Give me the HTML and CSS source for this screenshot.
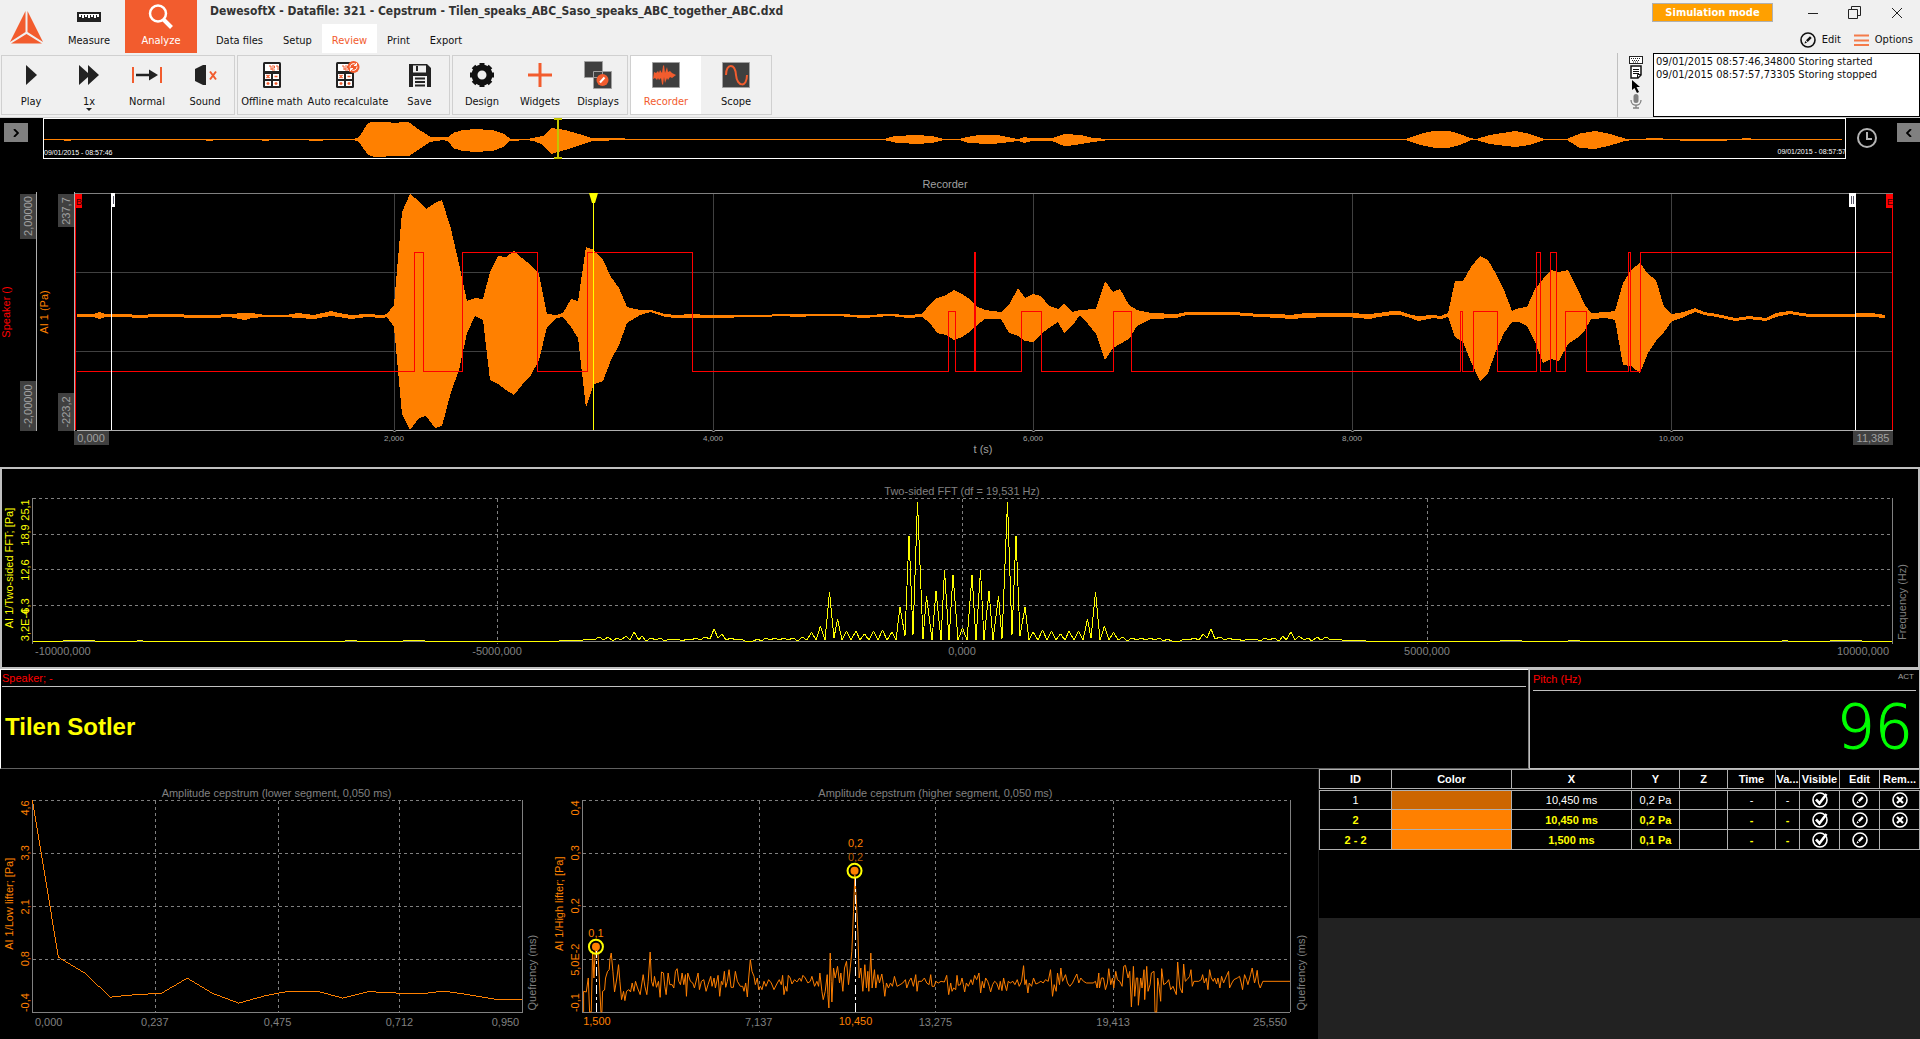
FILE: index.html
```html
<!DOCTYPE html>
<html lang="en">
<head>
<meta charset="utf-8">
<meta name="viewport" content="width=device-width, initial-scale=1">
<title>DewesoftX - Cepstrum</title>
<link rel="stylesheet" href="styles.css">
</head>
<body>
<svg class="defs" aria-hidden="true">
  <symbol id="i-calc" viewBox="0 0 18 26">
    <rect width="18" height="26" rx="1.5" fill="#222"/><rect x="2" y="2" width="14" height="7" fill="#fff"/>
    <path d="M6 4h2v4M9 4h2.500v2H9v2h3M13 4h2v4" stroke="#f25c2e" fill="none"/>
    <path d="M2 12h6v5H2zM10 12h6v5h-6zM2 19h6v5H2zM10 19h6v5h-6z" fill="#fff"/>
    <path d="M3.500 13l3 3m0-3l-3 3M11.500 14.500h3M3.500 21.500h3M5 20v3M11.500 21.500h3M13 20v3" stroke="#f25c2e" stroke-width="1.300"/>
  </symbol>
  <symbol id="i-edit" viewBox="0 0 16 16">
    <circle cx="8" cy="8" r="7" fill="none" stroke="currentColor" stroke-width="1.600"/>
    <path d="M4.500 11.500l.8-2.500 1.700 1.700zM6 8.300l4-4 1.700 1.700-4 4z" fill="currentColor"/>
  </symbol>
  <symbol id="i-check" viewBox="0 0 16 16">
    <circle cx="8" cy="8" r="7" fill="none" stroke="currentColor" stroke-width="1.600"/>
    <path d="M4 7.500l3.500 3.800L14.500 2" fill="none" stroke="currentColor" stroke-width="2.600"/>
  </symbol>
  <symbol id="i-remove" viewBox="0 0 16 16">
    <circle cx="8" cy="8" r="7" fill="none" stroke="currentColor" stroke-width="1.600"/>
    <path d="M5 5l6 6m0-6l-6 6" stroke="currentColor" stroke-width="2.200"/>
  </symbol>
</svg>

<header class="header">
  <div class="top">
    <svg class="logo" viewBox="0 0 36 34" aria-label="Dewesoft" role="img">
      <path d="M16.500 1L1 32 16.500 22zM18.500 1L34 32 18.500 22zM2 33.500L17.500 24 33 33.500z" fill="#f25c2e"/>
    </svg>
    <button class="mode">
      <svg width="24" height="10" viewBox="0 0 24 10"><rect width="24" height="10" fill="#222"/><path d="M2 2h20v3h-2v-2h-1v3h-2V3h-1v2h-2V3h-1v3h-2V3h-1v2H8V3H7v3H5V3H4v2H2z" fill="#fff"/></svg>
      <span>Measure</span>
    </button>
    <button class="mode active">
      <svg width="26" height="26" viewBox="0 0 26 26" fill="none" stroke="#fff"><circle cx="10" cy="9.500" r="8" stroke-width="2.500"/><path d="M15.500 15.500l8 8" stroke-width="4"/></svg>
      <span>Analyze</span>
    </button>
    <div class="heading">
      <h1>DewesoftX - Datafile: 321 - Cepstrum - Tilen_speaks_ABC_Saso_speaks_ABC_together_ABC.dxd</h1>
      <nav class="tabs">
        <button>Data files</button><button>Setup</button><button class="active">Review</button><button>Print</button><button>Export</button>
      </nav>
    </div>
    <div class="window">
      <div class="windowbar">
        <span class="badge">Simulation mode</span>
        <button aria-label="Minimize"><svg width="14" height="14" viewBox="0 0 14 14"><path d="M2 7.500h10" stroke="#222"/></svg></button>
        <button aria-label="Restore"><svg width="14" height="14" viewBox="0 0 14 14" fill="none" stroke="#222"><path d="M.5 3.500h9v9h-9zM3.500 3.500v-3h9v9h-3"/></svg></button>
        <button aria-label="Close"><svg width="14" height="14" viewBox="0 0 14 14"><path d="M2 2l10 10M12 2L2 12" stroke="#222"/></svg></button>
      </div>
      <div class="links">
        <button><svg width="16" height="16"><use href="#i-edit"/></svg>Edit</button>
        <button><svg width="15" height="12" viewBox="0 0 15 12"><path d="M0 1.500h15M0 6.500h15M0 11h15" stroke="#f47b4a" stroke-width="2"/></svg>Options</button>
      </div>
    </div>
  </div>

  <div class="ribbon">
    <div class="group narrow">
      <button><svg width="28" height="28" viewBox="0 0 28 28"><path d="M9 4l11 10L9 24z" fill="#222"/></svg>Play</button>
      <button class="drop"><svg width="28" height="28" viewBox="0 0 28 28"><path d="M4 4l9 8V4l11 10-11 10v-8L4 24z" fill="#222"/></svg>1x</button>
      <button><svg width="32" height="28" viewBox="0 0 32 28"><path d="M2 6v16M30 6v16" stroke="#f25c2e" stroke-width="2"/><path d="M5 14h16" stroke="#222" stroke-width="2.500"/><path d="M18 8.500L27 14l-9 5.500z" fill="#222"/></svg>Normal</button>
      <button><svg width="28" height="28" viewBox="0 0 28 28"><path d="M4 8l8-4h3v20h-3l-8-4z" fill="#222"/><path d="M19 10.500l6 8m0-8l-6 8" stroke="#f25c2e" stroke-width="2"/></svg>Sound</button>
    </div>
    <div class="group math">
      <button><svg width="18" height="28" viewBox="0 0 18 26"><use href="#i-calc"/></svg>Offline math</button>
      <button><svg width="24" height="28" viewBox="0 0 24 28"><use href="#i-calc" width="18" height="26" y="1"/><circle cx="17.500" cy="6" r="6" fill="#f25c2e"/><path d="M14 6.500a3.500 3.500 0 016-2.800M21 5.500a3.500 3.500 0 01-6 2.800M20.500 2v2.500H18M14.500 10V7.500H17" fill="none" stroke="#fff"/></svg>Auto recalculate</button>
      <button><svg width="24" height="28" viewBox="0 0 24 28"><path d="M1 3h18l4 4v19H1zM5 4.500v7h13v-7zM5 15v11h14V15z" fill="#222" fill-rule="evenodd"/><path d="M9 5v5M7 17.500h10M7 21h10M7 24.500h10" stroke="#222" stroke-width="2"/></svg>Save</button>
    </div>
    <div class="group narrow">
      <button><svg width="28" height="28" viewBox="0 0 28 28"><circle cx="14" cy="14" r="7.500" fill="none" stroke="#111" stroke-width="6"/><path d="M14 2v4M14 22v4M2 14h4M22 14h4M5.500 5.500l3 3M19.500 19.500l3 3M22.500 5.500l-3 3M8.500 19.500l-3 3" stroke="#111" stroke-width="5"/></svg>Design</button>
      <button><svg width="26" height="28" viewBox="0 0 26 28"><path d="M13 2v24M1 14h24" stroke="#f25c2e" stroke-width="3"/></svg>Widgets</button>
      <button><svg width="30" height="28" viewBox="0 0 30 28"><path d="M1.500.5h18v16h-18zM10.500 10.500h18v17h-18z" fill="#3f3f3f" stroke="#a0a0a0"/><circle cx="19.500" cy="19" r="6" fill="#f25c2e"/><path d="M17 21.500l4.500-5" stroke="#fff" stroke-width="2"/></svg>Displays</button>
    </div>
    <div class="group wide">
      <button class="active"><svg width="28" height="28" viewBox="0 0 28 28"><path d="M.5 1.500h27v25H.5z" fill="#3f3f3f" stroke="#a0a0a0"/><path d="M2 11l2 1 2-2 1 2 1-3 2 3 1-7 1-1 1 8 2-6 1 5 2-1 2 2 4 2-4 3-2-1-2 3-1-2-2 5-1-6-1 8-1-1-1-6-2 2-1-2-1 2-2-2-2 1z" fill="#f25c2e"/></svg>Recorder</button>
      <button><svg width="28" height="28" viewBox="0 0 28 28"><path d="M.5 1.500h27v25H.5z" fill="#3f3f3f" stroke="#a0a0a0"/><path d="M4 14C4 2 13 2 14 14s11 13 11 0" fill="none" stroke="#f25c2e" stroke-width="2"/></svg>Scope</button>
    </div>
    <div class="events">
      <div class="eventtools">
        <svg width="14" height="8" viewBox="0 0 14 8"><rect x=".5" y=".5" width="13" height="7" fill="#fff" stroke="#222"/><path d="M2 2.500h10M3 4.500h8M4 6h6" stroke="#222" stroke-dasharray="1 1"/></svg>
        <svg width="12" height="14" viewBox="0 0 12 14"><path d="M1 1h10v9l-3 3H1z" fill="#fff" stroke="#111" stroke-width="1.500"/><path d="M3 4.500h6M3 6.500h6M3 8.500h6M11 9.500H7.500V13" stroke="#111" fill="none"/></svg>
        <svg width="12" height="13" viewBox="0 0 12 13"><path d="M2 0l8 7H6.500L9 12l-2 1-2.500-5L2 10z" fill="#000"/></svg>
        <svg width="12" height="15" viewBox="0 0 12 15"><rect x="3.500" y="0" width="5" height="9" rx="2.500" fill="#808080"/><path d="M1 6c0 7 10 7 10 0M6 11v3M3 14h6" fill="none" stroke="#808080" stroke-width="1.300"/></svg>
      </div>
      <textarea class="log" readonly aria-label="Event log">09/01/2015 08:57:46,34800 Storing started
09/01/2015 08:57:57,73305 Storing stopped</textarea>
    </div>
  </div>
</header>

<main>
  <section class="overview" aria-label="Overview">
    <button class="side" aria-label="Expand left panel"><svg width="6" height="8" viewBox="0 0 6 8"><path d="M1 0l4 4-4 4" fill="none" stroke="#000" stroke-width="1.800"/></svg></button>
    <svg class="strip" viewBox="43 118 1803 41">
      <rect class="crisp" x="43.500" y="118.500" width="1802" height="40" fill="#000" stroke="#fff"/>
      <path class="crisp" fill="#ff8000" d="M44 139H354L359 137 368 123 373 121.500H386L394 123 408 121.500 418 129 430 136.500H443L448 137 454 132.500 463 130 477 129 494 130.500 504 134 510 138.500 528 139 535 137.500 543 136 551 128 565 130 581 134.500 592 138 625 138.500H626V139H884L895 136 916 135 932 136 942 138.500 959 139 967 137 979 135H997L1010 137.500 1018 139 1024 137 1032 138.500 1052 138 1065 134 1081 135 1093 138 1109 139H1406L1420 134 1435 130.500H1448L1460 134 1470 138 1476 139 1490 135 1515 131 1530 134 1543 138.500 1567 139 1575 135.500 1580 133.500 1595 131 1610 134 1625 138.500 1640 139 1652 138H1663V139H1742V138H1751V139H1842V140H1727V141H1680V140H1632L1625 141 1610 145.500 1595 149 1580 148 1575 145 1567 140 1543 140.500 1530 145 1515 147 1490 144 1476 140 1470 140.500 1460 145 1448 148H1435L1420 145 1406 140H1109L1093 142 1081 144 1065 146.500 1052 141H1032L1024 143 1018 141 1010 142 997 143.500H979L967 142.500 959 140 942 140.500 932 143 916 144 895 142.500 884 140H626L592 141 581 145 565 150 551 154 543 145 535 141.500 528 140 510 141 504 146.500 494 150.500 477 152 463 151 454 148.500 448 141.500 443 140 430 142 418 150 408 156.500 394 155.500 386 156.500H373L368 155 359 142 354 140H323V141H309V140H269V141H262V140H213V141H206V140H71V141H64V140H44z"/>
      <path class="crisp" d="M558 119v39" stroke="#c4c400" stroke-width="2"/><path class="crisp" d="M554 119h8M554 158h8" stroke="#c4c400" stroke-width="2"/>
      <text class="tiny lit" x="44" y="155">09/01/2015 - 08:57:46</text>
      <text class="tiny lit" x="1846" y="154" text-anchor="end">09/01/2015 - 08:57:57</text>
    </svg>
    <svg class="clock" width="20" height="20" viewBox="0 0 20 20" fill="none" stroke="#b4b4b4"><circle cx="10" cy="10" r="9" stroke-width="2"/><path d="M10 4v7h5" stroke-width="2"/></svg>
    <button class="side last" aria-label="Expand right panel"><svg width="6" height="8" viewBox="0 0 6 8"><path d="M5 0L1 4l4 4" fill="none" stroke="#000" stroke-width="1.800"/></svg></button>
  </section>

  <section aria-label="Recorder">
    <svg class="chart" viewBox="0 159 1920 308">
      <text class="light" x="945" y="188" text-anchor="middle">Recorder</text>
      <g class="crisp" fill="none">
        <path stroke="#404040" d="M394.500 194V430M713.500 194V430M1033.500 194V430M1352.500 194V430M1671.500 194V430M76 272.500H1893M76 351.500H1893"/>
        <path stroke="#808080" d="M75 193.500H1893"/>
        <path stroke="#b0b0b0" d="M36.500 192V431M74.500 192V431M77 430.500H1893"/>
        <path stroke="#f00" d="M75.500 194V430M1892.500 194V430"/>
      </g>
      <g fill="#000" stroke="#b0b0b0"><path d="M392.500 430l2 2 2-2M711.500 430l2 2 2-2M1031.500 430l2 2 2-2M1350.500 430l2 2 2-2M1669.500 430l2 2 2-2"/></g>
      <path class="crisp" fill="#ff8000" d="M77 314H94L99 312 105 314H122L141 315 155 314 212 315 229 314 245 313 251 313 265 315H286L298 313 314 315 331 311 339 313 351 315 367 314 382 315 387 314 394 305 402 212 410 194 419 201 426 209 435 203 442 200 451 229 459 264 467 301 475 298 483 299 490 272 498 256 506 257 514 251 522 258 531 265 539 274 547 314 556 315 563 313 571 299 578 301 586 247 594 250 603 260 611 277 619 288 627 307 640 310H651L665 314 676 315 692 314 707 315H761L783 314H837L863 315 890 314 908 315 922 314 930 304 937 298 946 295 954 290 962 294 968 298 976 306 985 310 1001 312 1009 305 1018 288 1025 298 1033 294 1041 296 1049 306 1058 309 1064 304 1072 312 1080 310 1096 309 1105 281 1113 292 1120 289 1129 305 1137 310 1151 313 1176 314 1187 312H1234L1259 314 1280 314 1290 315 1306 313H1347L1370 314 1378 313 1392 311H1400L1411 315 1418 316 1433 315 1441 316 1448 313 1455 281 1463 281 1471 267 1480 256 1488 260 1496 274 1504 290 1512 311 1519 308 1527 307 1535 289 1543 279 1551 270 1559 272 1568 270 1577 288 1585 305 1591 313 1606 312 1615 311 1623 283 1631 270 1640 263 1648 274 1656 280 1664 307 1672 314 1684 312 1695 308 1704 312 1717 314 1735 318 1749 316 1766 318 1776 313 1790 311 1809 314H1839L1872 313 1885 315V318L1872 317H1809L1790 314 1776 317 1766 321 1749 319 1735 321 1717 317 1704 315 1695 312 1684 317 1672 321 1664 332 1656 341 1648 353 1640 373 1631 366 1623 365 1615 320 1606 318 1591 319 1585 330 1577 338 1568 344 1559 361 1551 359 1543 363 1535 342 1527 326 1519 322H1512L1504 333 1496 351 1488 373 1480 381 1471 362 1463 342 1455 337 1448 317 1441 319 1433 318 1418 321 1411 318 1400 315H1392L1378 317 1370 319 1347 317H1325L1306 318 1290 319 1280 318 1259 317 1234 315H1187L1176 318 1151 319 1137 326 1129 339 1120 344 1113 348 1105 360 1096 334 1088 324 1080 315 1072 326 1064 333 1058 322 1049 328 1041 334 1033 342 1025 341 1018 336 1009 333 1001 319H985L976 326 968 333 962 337 954 340 946 335 937 333 930 323 922 317 908 318 890 316 863 318 837 316H814L797 317 783 316 761 317 707 318H676L665 317 651 312 640 315 627 323 619 345 611 360 603 381 594 384 586 408 578 338 571 327 563 317 556 318 547 327 539 360 531 375 522 385 514 395 506 390 498 384 490 380 483 320 475 316 467 333 459 370 451 392 442 426 435 428 426 416 419 418 410 430 402 414 394 327 387 317 382 318 367 317 351 319 339 317 331 316 314 319 298 318 286 317H265L251 318 245 320 229 317 212 318 155 317 141 318 122 317H105L99 319 94 317H77z"/>
      <path class="crisp" fill="none" stroke="#f00" d="M77 371.500H414.500V252.500H423.500V371.500H462.500V252.500H537.500V371.500H587.500V252.500H692.500V371.500H948.500V311.500H955.500V371.500H974.500V252.500H975.500V371.500H1021.500V311.500H1041.500V371.500H1113.500V311.500H1131.500V371.500H1460.500V311.500H1462.500V371.500H1473.500V311.500H1497.500V371.500H1536.500V252.500H1540.500V371.500H1550.500V252.500H1556.500V371.500H1565.500V311.500H1586.500V371.500H1628.500V252.500H1630.500V371.500H1640.500V252.500H1891"/>
      <path class="crisp" d="M111.500 193V430M1855.500 193V430" stroke="#fff"/>
      <path class="crisp" d="M111 193h4v14h-4zM1849 193h7v14h-7z" fill="#fff"/>
      <path class="crisp" d="M113.500 196v8M1851.500 196v8M1853.500 196v8" stroke="#556"/>
      <path class="crisp" d="M75 194h7v14h-7zM1886 194h7v14h-7z" fill="#f00"/>
      <text class="flag" x="76" y="205">B</text><text class="flag" x="1887" y="205">E</text>
      <path class="crisp" d="M593.500 194V430" stroke="#ff0"/><path d="M589 193h9l-3 10h-3z" fill="#ff0"/>
      <path class="crisp" fill="#404040" d="M20 194h16v45H20zM20 381h16v50H20zM58 194h16v33H58zM58 393h16v38H58zM74 431h35v14H74zM1853 431h40v14h-40z"/>
      <g class="light" text-anchor="middle">
        <text transform="translate(32 216) rotate(-90)">2,00000</text>
        <text transform="translate(32 406) rotate(-90)">-2,00000</text>
        <text transform="translate(70 211) rotate(-90)">237,7</text>
        <text transform="translate(70 412) rotate(-90)">-223,2</text>
        <text x="91" y="442">0,000</text><text x="1873" y="442">11,385</text>
        <text x="983" y="453">t (s)</text>
      </g>
      <g class="ticks" text-anchor="middle">
        <text x="394" y="441">2,000</text><text x="713" y="441">4,000</text><text x="1033" y="441">6,000</text><text x="1352" y="441">8,000</text><text x="1671" y="441">10,000</text>
      </g>
      <text class="red" text-anchor="middle" transform="translate(10 312) rotate(-90)">Speaker ()</text>
      <text class="orange" text-anchor="middle" transform="translate(48 312) rotate(-90)">AI 1 (Pa)</text>
    </svg>
  </section>

  <section class="fft" aria-label="Two-sided FFT">
    <svg class="chart" viewBox="2 469 1916 198">
      <g class="crisp" fill="none" stroke="#808080">
        <path stroke-dasharray="3 3" d="M33 498.500H1892M33 534.500H1892M33 569.500H1892M33 605.500H1892M497.500 499V644M962.500 499V644M1427.500 499V644"/>
        <path d="M32.500 498V644M1892.500 498V644M32 641.500H1892"/>
      </g>
      <text class="gray" x="962" y="495" text-anchor="middle">Two-sided FFT (df = 19,531 Hz)</text>
      <g id="half" class="crisp" fill="none" stroke="#ff0" stroke-linejoin="bevel">
        <path d="M962.500 628L967 640 972 575 976 640 980.500 570 984 640 989 591 993 640 998.500 596 1002 639 1007.500 502 1012 635 1016 536 1020 636 1025 607 1029 640 1033 632 1038 640 1042.500 630 1047 640 1051.500 631 1056 640 1060.500 634 1065 640 1069 631 1074 640 1078.500 631 1083 640 1087.500 619 1091 638 1095.500 592 1100 640 1104.500 626 1109 640 1113.500 632 1118 640 1123 637 1127 641 1132 638 1137 640 1141 638 1146 640 1150 638 1155 640 1159 638 1164 641 1167 639 1172 641H1180L1184 639 1189 640 1194 638 1199 640 1203 634 1207 638 1211 629 1215 639 1220 637 1225 640 1229 638 1234 640 1238 639 1243 641 1247 639 1252 640 1256 639 1260 641 1265 638 1269 640 1274 638 1279 641 1283 636 1286 640 1291 632 1295 640 1299 636 1304 640 1308 638 1312 641 1317 637 1321 640 1326 637 1331 640 1334 639 1346 640.500H1352L1358 640H1362L1366 641H1500L1504 640 1510 641 1514 640H1518L1522 641H1568L1572 640H1576L1580 641H1782L1785 640 1788 641H1830L1836 640 1842 641 1850 640H1856L1862 641H1892"/>
      </g>
      <use href="#half" transform="translate(1925 0) scale(-1 1)"/>
      <g class="gray">
        <text x="35" y="655">-10000,000</text><text x="497" y="655" text-anchor="middle">-5000,000</text><text x="962" y="655" text-anchor="middle">0,000</text><text x="1427" y="655" text-anchor="middle">5000,000</text><text x="1889" y="655" text-anchor="end">10000,000</text>
        <text text-anchor="middle" transform="translate(1906 602) rotate(-90)">Frequency (Hz)</text>
      </g>
      <g class="yellow" text-anchor="middle">
        <text transform="translate(13 568) rotate(-90)">AI 1/Two-sided FFT; [Pa]</text>
        <text transform="translate(29 510) rotate(-90)">25,1</text><text transform="translate(29 535) rotate(-90)">18,9</text><text transform="translate(29 570) rotate(-90)">12,6</text><text transform="translate(29 606) rotate(-90)">6,3</text><text transform="translate(29 625) rotate(-90)">3,2E-4</text>
      </g>
    </svg>
  </section>

  <div class="readouts">
    <section class="speaker">
      <h2>Speaker; -</h2>
      <p>Tilen Sotler</p>
    </section>
    <section class="pitch">
      <h2>Pitch (Hz)<span>ACT</span></h2>
      <p>96</p>
    </section>
  </div>

  <div class="bottom">
    <section aria-label="Lower segment">
      <svg class="chart" viewBox="0 769 550 270">
        <g class="crisp" fill="none" stroke="#808080">
          <path stroke-dasharray="3 3" d="M33 800.500H523M33 853.500H523M33 906.500H523M33 959.500H523M155.500 801V1012M278.500 801V1012M400.500 801V1012"/>
          <path d="M32.500 800V1012.500H523.500V800"/>
        </g>
        <path class="crisp" fill="none" stroke="#ff8000" d="M32.500 800.500L58.500 957.500 85 973.500 110.500 997.500 130 995.500 162 993.500 187.500 978.500 213.500 994 239 1003.500 266 996 289.500 991.500H316L343 998.500 369 992 400 993.500H427L444.500 991.500 462.500 994 496 999.500H523"/>
        <g class="gray" text-anchor="middle">
          <text x="277" y="797">Amplitude cepstrum (lower segment, 0,050 ms)</text>
          <text x="35" y="1026" text-anchor="start">0,000</text><text x="155" y="1026">0,237</text><text x="278" y="1026">0,475</text><text x="400" y="1026">0,712</text><text x="520" y="1026" text-anchor="end">0,950</text>
          <text transform="translate(537 973) rotate(-90)">Quefrency (ms)</text>
        </g>
        <g class="orange" text-anchor="middle">
          <text transform="translate(13 904) rotate(-90)">AI 1/Low lifter; [Pa]</text>
          <text transform="translate(29 808) rotate(-90)">4,6</text><text transform="translate(29 853) rotate(-90)">3,3</text><text transform="translate(29 907) rotate(-90)">2,1</text><text transform="translate(29 959) rotate(-90)">0,8</text><text transform="translate(29 1003) rotate(-90)">-0,4</text>
        </g>
      </svg>
    </section>
    <section aria-label="Higher segment">
      <svg class="chart" viewBox="550 769 770 270">
        <g class="crisp" fill="none" stroke="#808080">
          <path stroke-dasharray="3 3" d="M584 800.500H1292M584 853.500H1292M584 906.500H1292M584 959.500H1292M760.500 801V1012M937.500 801V1012M1115.500 801V1012"/>
          <path d="M583.500 800V1012.500H1292.500V800"/>
        </g>
        <path class="crisp" fill="none" stroke="#ff8000" stroke-width="3" stroke-linejoin="bevel" transform="translate(540 765) scale(.3333)" d="M134 742V680L142 682 148 640 152 742H157L161 560 165 640 168 575 171 548 177 560 181 640 186 742H189L191 680 197 676 200 640 206 620 211 615 213 585 217 565 222 620 227 682 234 640 239 600 243 650 248 705 254 680 258 708 263 680 270 675 275 682 280 655 285 680 290 650 296 670 304 690 313 630 318 665 324 690 328 650 334 562 338 650 343 665 347 635 353 668 359 650 364 698 368 622 374 625 378 665 382 690 388 625 393 660 400 660 405 670 410 620 415 612 420 650 425 660 430 625 435 660 440 630 443 695 447 625 455 650 462 655 467 670 478 625 482 675 488 650 495 645 502 680 508 660 516 635 520 665 526 640 530 670 538 632 543 695 548 650 552 660 557 620 561 668 566 650 571 615 577 668 584 668 590 620 596 650 605 665 612 665 616 680 621 655 626 697 630 640 635 585 640 620 646 635 650 660 656 640 660 675 665 665 670 675 676 650 682 665 690 645 698 655 706 675 716 655 722 645 728 660 732 632 736 690 741 665 745 680 749 632 755 640 760 658 768 645 775 652 783 640 788 650 793 632 800 640 808 655 815 650 820 635 828 665 835 650 840 665 844 625 850 680 854 705 860 680 866 630 868 690 871 730 875 565 878 650 880 712 885 610 890 640 897 605 903 655 907 625 913 680 918 610 924 590 930 660 935 612 940 560 945 440 949 330 953 400 958 500 962 640 967 610 973 680 979 600 984 670 988 620 991 680 997 565 1001 670 1008 615 1012 670 1018 630 1023 655 1030 628 1035 660 1039 695 1044 655 1050 670 1056 655 1062 665 1068 635 1076 665 1085 660 1093 655 1101 645 1105 670 1112 650 1118 640 1125 665 1132 630 1136 680 1140 650 1150 650 1158 640 1165 655 1172 660 1177 630 1181 665 1188 665 1192 650 1200 655 1208 650 1218 652 1225 632 1231 690 1237 655 1241 680 1246 670 1252 675 1256 632 1260 662 1266 660 1271 640 1275 660 1279 682 1284 655 1290 665 1298 645 1303 660 1309 632 1315 645 1322 625 1327 685 1332 650 1337 670 1342 640 1348 650 1353 665 1357 682 1363 660 1369 650 1375 655 1382 675 1386 650 1391 678 1396 640 1400 660 1405 678 1410 650 1416 655 1424 650 1430 660 1437 645 1443 665 1450 650 1456 603 1460 660 1464 645 1469 685 1473 655 1480 665 1486 640 1493 658 1500 655 1508 650 1515 655 1522 645 1530 650 1537 615 1543 695 1548 660 1554 680 1558 625 1564 660 1568 610 1573 650 1582 630 1588 655 1595 665 1603 655 1610 640 1616 628 1622 655 1628 640 1636 650 1645 655 1665 655 1672 650 1677 670 1682 625 1684 670 1690 640 1696 640 1702 675 1708 655 1712 612 1718 660 1723 640 1727 670 1733 620 1738 645 1745 650 1752 665 1757 605 1762 602 1770 640 1775 620 1780 727 1786 605 1790 695 1795 640 1799 640 1801 722 1808 640 1812 670 1818 615 1820 705 1826 605 1830 680 1836 660 1840 625 1848 620 1851 742 1856 742 1859 640 1863 665 1868 710 1871 612 1877 660 1885 655 1892 645 1898 675 1905 665 1915 690 1919 592 1923 640 1926 670 1933 685 1937 598 1942 650 1947 645 1955 635 1959 615 1963 665 1968 650 1982 650 1990 645 1994 630 1999 655 2005 640 2010 675 2015 615 2020 640 2026 650 2030 640 2036 658 2040 640 2046 670 2051 635 2057 655 2063 640 2072 620 2075 670 2082 655 2088 645 2098 640 2105 635 2110 655 2114 675 2120 630 2126 645 2130 660 2138 630 2143 610 2150 655 2154 640 2158 617 2162 655 2167 670 2175 650H2257"/>
        <path class="crisp" d="M597.500 1012V951M856.500 1012V875" stroke="#fff" stroke-dasharray="9 3 3 3"/>
        <g stroke="#ff0" stroke-width="2" fill="none"><circle cx="597" cy="947" r="7"/><circle cx="856" cy="871" r="7"/></g>
        <g fill="#ff8000"><circle cx="597" cy="947" r="4"/><circle cx="856" cy="871" r="4"/></g>
        <g class="gray" text-anchor="middle">
          <text x="937" y="797">Amplitude cepstrum (higher segment, 0,050 ms)</text>
          <text x="760" y="1026">7,137</text><text x="937" y="1026">13,275</text><text x="1115" y="1026">19,413</text><text x="1289" y="1026" text-anchor="end">25,550</text>
          <text transform="translate(1307 973) rotate(-90)">Quefrency (ms)</text>
        </g>
        <g class="orange" text-anchor="middle">
          <text x="598" y="1025">1,500</text><text x="857" y="1025">10,450</text>
          <text x="597" y="937">0,1</text><text x="857" y="847">0,2</text><text class="dim" x="857" y="861">0,2</text>
          <text transform="translate(564 904) rotate(-90)">AI 1/High lifter; [Pa]</text>
          <text transform="translate(580 808) rotate(-90)">0,4</text><text transform="translate(580 853) rotate(-90)">0,3</text><text transform="translate(580 906) rotate(-90)">0,2</text><text transform="translate(580 960) rotate(-90)">5,0E-2</text><text transform="translate(580 1003) rotate(-90)">-0,1</text>
        </g>
      </svg>
    </section>
    <section class="cursors" aria-label="Cursors">
      <div class="tablewrap">
        <table>
          <colgroup><col class="c72"><col class="c120"><col class="c120"><col class="c48"><col class="c48"><col class="c48"><col class="c24"><col class="c40"><col class="c40"><col class="c40"></colgroup>
          <thead><tr><th>ID</th><th>Color</th><th>X</th><th>Y</th><th>Z</th><th>Time</th><th>Va...</th><th>Visible</th><th>Edit</th><th>Rem...</th></tr></thead>
          <tbody>
            <tr><td>1</td><td class="brown"></td><td>10,450 ms</td><td>0,2 Pa</td><td></td><td>-</td><td>-</td>
              <td><label class="tick"><input type="checkbox" checked aria-label="Cursor 1 visible"><svg width="16" height="16"><use href="#i-check"/></svg></label></td>
              <td><button aria-label="Edit cursor 1"><svg width="16" height="16"><use href="#i-edit"/></svg></button></td>
              <td><button aria-label="Remove cursor 1"><svg width="16" height="16"><use href="#i-remove"/></svg></button></td></tr>
            <tr class="selected"><td>2</td><td class="amber"></td><td>10,450 ms</td><td>0,2 Pa</td><td></td><td>-</td><td>-</td>
              <td><label class="tick"><input type="checkbox" checked aria-label="Cursor 2 visible"><svg width="16" height="16"><use href="#i-check"/></svg></label></td>
              <td><button aria-label="Edit cursor 2"><svg width="16" height="16"><use href="#i-edit"/></svg></button></td>
              <td><button aria-label="Remove cursor 2"><svg width="16" height="16"><use href="#i-remove"/></svg></button></td></tr>
            <tr class="selected"><td>2 - 2</td><td class="amber"></td><td>1,500 ms</td><td>0,1 Pa</td><td></td><td>-</td><td>-</td>
              <td><label class="tick"><input type="checkbox" checked aria-label="Cursor 2 - 2 visible"><svg width="16" height="16"><use href="#i-check"/></svg></label></td>
              <td><button aria-label="Edit cursor 2 - 2"><svg width="16" height="16"><use href="#i-edit"/></svg></button></td>
              <td></td></tr>
          </tbody>
        </table>
      </div>
    </section>
  </div>
</main>
</body>
</html>
```
FILE: styles.css
```css
* { box-sizing: border-box; }

body {
  margin: 0;
  min-height: 100vh;
  display: flex;
  flex-direction: column;
  background: #000;
  font: 11px "Liberation Sans", Arial, sans-serif;
}

h1, h2, p { margin: 0; }

button {
  border: 0;
  padding: 0;
  background: none;
  color: inherit;
  font: inherit;
}

.defs { position: absolute; width: 0; height: 0; }

/* Header */
.header {
  background: #f0f0f0;
  border-bottom: 1px solid #d0d0d0;
  color: #111;
  font: 11px/14px "DejaVu Sans Condensed", "DejaVu Sans", Tahoma, sans-serif;
}

.top { display: flex; height: 53px; }
.logo { width: 36px; height: 34px; margin: 10px 8px 0 9px; }

.mode {
  width: 72px;
  display: flex;
  flex-direction: column;
  align-items: center;
  justify-content: space-between;
  padding: 12px 0 5px;
}
.mode.active { background: #f25c2e; color: #fff; padding-top: 4px; }

.heading { flex: 1; min-width: 0; padding-left: 13px; }
.heading h1 {
  height: 24px;
  color: #333;
  font-size: 12px;
  line-height: 22px;
  font-weight: bold;
  white-space: nowrap;
  overflow: hidden;
}
.tabs { display: flex; height: 29px; margin-left: -4px; }
.tabs button { padding: 4px 10px 0; }
.tabs .active { background: #fff; color: #f25c2e; }

.window { width: 268px; padding-top: 3px; }
.windowbar { display: flex; align-items: center; gap: 28px; }
.badge {
  width: 121px;
  height: 19px;
  margin-right: 5px;
  border: 1px solid #b0b0b0;
  background: #ffa000;
  color: #fff;
  font-weight: bold;
  line-height: 17px;
  text-align: center;
}
.windowbar svg, .links svg { display: block; }
.links { display: flex; justify-content: flex-end; gap: 13px; padding: 10px 7px 0 0; }
.links button { display: flex; align-items: center; gap: 6px; }

.ribbon { display: flex; gap: 2px; padding-left: 1px; height: 64px; }
.group { display: flex; height: 60px; margin-top: 2px; border: 1px solid #d0d0d0; }
.group button {
  position: relative;
  display: flex;
  flex-direction: column;
  align-items: center;
  gap: 6px;
  padding-top: 5px;
  white-space: nowrap;
}
.group svg { display: block; }
.narrow button { width: 58px; }
.wide button { width: 70px; }
.math button { width: 68px; }
.math button:nth-child(2) { width: 84px; }
.math button:nth-child(3) { width: 59px; }
.group .active { background: #fff; color: #f25c2e; }
.drop::after {
  content: "";
  position: absolute;
  bottom: 3px;
  border: 3px solid transparent;
  border-top-color: #222;
  border-bottom: 0;
}

.events { display: flex; width: 303px; margin-left: auto; border-left: 1px solid #c0c0c0; }
.eventtools {
  flex: 1;
  display: flex;
  flex-direction: column;
  align-items: center;
  justify-content: space-between;
  padding: 3px 0 8px;
}
.log {
  width: 267px;
  height: 64px;
  padding: 1px 2px;
  border: 1px solid #000;
  background: #fff;
  color: #111;
  font: 11px/13px "DejaVu Sans Condensed", "DejaVu Sans", Tahoma, sans-serif;
  resize: none;
  overflow: hidden;
  white-space: nowrap;
}

/* Charts */
main { flex: 1; display: flex; flex-direction: column; }
.chart { display: block; width: 100%; height: auto; }
.crisp { shape-rendering: crispEdges; }
text { font-size: 11px; }
.light { fill: #a0a0a0; }
.gray { fill: #808080; }
.red { fill: #f00; }
.orange { fill: #ff8000; }
.yellow { fill: #ff0; }
.dim { fill: #b85c00; }
.ticks text { font-size: 8px; fill: #a0a0a0; }
text.tiny { font-size: 7px; }
text.lit { fill: #fff; }
.flag { font-size: 9px; fill: #300; }

.overview { display: flex; align-items: flex-start; padding-left: 4px; }
.side {
  width: 24px;
  height: 19px;
  margin-top: 5px;
  background: #808080;
}
.side.last { width: 23px; }
.strip { flex: 1; min-width: 0; height: auto; margin-left: 15px; }
.clock { margin: 10px 20px 0 11px; }

.fft { border: 2px solid #c0c0c0; }

/* Readouts */
.readouts { display: grid; grid-template-columns: 1529fr 391fr; min-height: 100px; }
.readouts h2 { color: #f00; font-size: 11px; font-weight: normal; }
.speaker {
  border: 1px solid #fff;
  border-color: #fff #808080 #606060 #fff;
  padding: 0 2px 0 1px;
}
.speaker h2 { border-bottom: 1px solid #c0c0c0; height: 17px; line-height: 16px; }
.speaker p {
  padding: 26px 3px 0;
  color: #ff0;
  font-size: 24px;
  line-height: 28px;
  font-weight: bold;
}
.pitch { border: 1px solid #c0c0c0; padding: 0 3px; }
.pitch h2 {
  display: flex;
  justify-content: space-between;
  height: 21px;
  border-bottom: 1px solid #c0c0c0;
  line-height: 19px;
}
.pitch h2 span { padding-right: 2px; color: #a0a0a0; font-size: 8px; line-height: 13px; }
.pitch p {
  padding: 0 3px;
  color: #0f0;
  font: 200 60px/72px "DejaVu Sans", sans-serif;
  -webkit-text-stroke: 1px #0f0;
  text-align: right;
}

/* Bottom row */
.bottom { flex: 1; display: grid; grid-template-columns: 550fr 770fr 600fr; }
.cursors { border-left: 1px solid #222; background: #222; }
.tablewrap { min-height: 149px; background: #000; }
table {
  width: 100%;
  table-layout: fixed;
  border-collapse: collapse;
  color: #fff;
  font-size: 11px;
}
.c24 { width: 24px; }
.c40 { width: 40px; }
.c48 { width: 48px; }
.c72 { width: 72px; }
.c120 { width: 120px; }
th, td {
  height: 20px;
  padding: 0;
  border: 1px solid #b0b0b0;
  text-align: center;
  white-space: nowrap;
  overflow: hidden;
}
thead th { border-bottom: 3px double #b0b0b0; }
.selected td { color: #ff0; font-weight: bold; }
.selected svg { color: #fff; }
td svg { display: block; margin: 0 auto; }
td button { display: block; margin: 0 auto; }
.brown { background: #cc6600; }
.amber { background: #ff8000; }
.tick { display: block; position: relative; }
.tick input { position: absolute; width: 16px; height: 16px; margin: 0; opacity: 0; }
```
